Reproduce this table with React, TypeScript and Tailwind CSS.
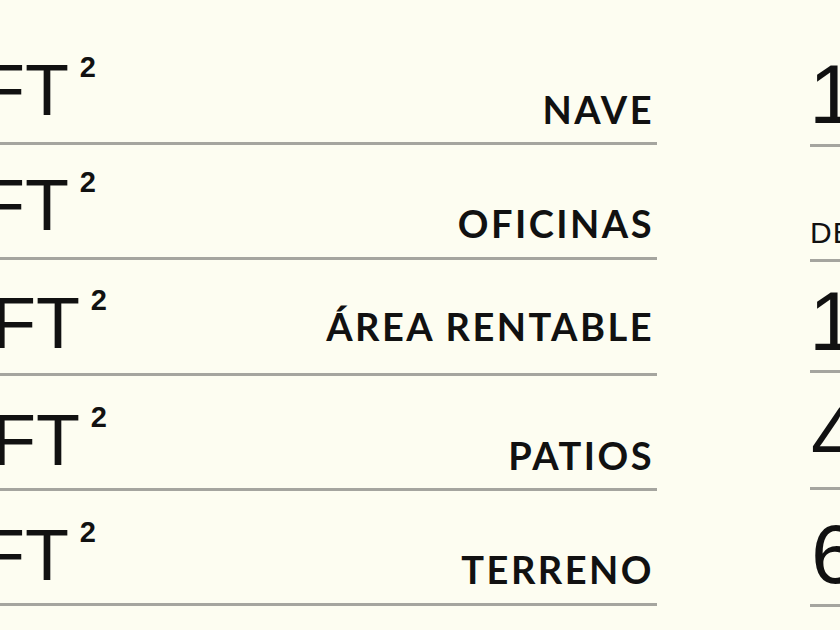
import React from 'react';

type Row = {
  value: string;
  label: string;
  valueBox: string;
  labelBox: string;
};

type Side = {
  text: string;
  box: string;
  textClass: string;
};

const rows: Row[] = [
  { value: '107,640', label: 'NAVE', valueBox: 'w-[96px] pb-[16px]', labelBox: 'pb-[14px]' },
  { value: '5,382', label: 'OFICINAS', valueBox: 'w-[96px] pb-[16px]', labelBox: 'pb-[15px]' },
  { value: '113,022', label: 'ÁREA RENTABLE', valueBox: 'w-[107px] pb-[14px]', labelBox: 'pb-[28px]' },
  { value: '48,438', label: 'PATIOS', valueBox: 'w-[107px] pb-[12px]', labelBox: 'pb-[14px]' },
  { value: '161,460', label: 'TERRENO', valueBox: 'w-[96px] pb-[12px]', labelBox: 'pb-[15px]' },
];

// right hand column, cut by the window edge
const side: Side[] = [
  { text: '10,000 M²', box: 'h-[116.75px] pb-[8px]', textClass: 'text-[84px] ml-[-1px]' },
  { text: 'DESDE 250 M²', box: 'h-[115px] pb-[11px]', textClass: "text-[30px] font-['Lato'] tracking-[0.04em]" },
  { text: '10,500 M²', box: 'h-[111px] pb-[7px]', textClass: 'text-[84px] ml-[-1px]' },
  { text: '4,500 M²', box: 'h-[117px] pb-[9px]', textClass: 'text-[84px] ml-[1px]' },
  { text: '6,000 M²', box: 'h-[117.5px] pb-[8px]', textClass: 'text-[84px] ml-[1px]' },
];

const App: React.FC = () => {
  return (
    <div className="relative h-[630px] w-[840px] overflow-hidden bg-[#fdfdf1] text-[#111111]">
      <div className="flex pt-[29.75px]">
        {/* superficies */}
        <div className="flex w-[657px] shrink-0 flex-col">
          {rows.map((r) => (
            <div key={r.label} className="flex h-[115.25px] border-b-[3px] border-[#a5a59f]">
              <div className={`flex shrink-0 items-end justify-end ${r.valueBox}`}>
                <div className="flex items-start whitespace-nowrap font-['Liberation_Sans',Arial,sans-serif]">
                  <span className="text-[72px] leading-none">{r.value} FT</span>
                  <span className="ml-[11px] mt-[-1px] text-[29px] font-bold leading-none">2</span>
                </div>
              </div>
              <div className={`flex flex-1 items-end justify-end pr-[3px] ${r.labelBox}`}>
                <span className="whitespace-nowrap font-['Lato',sans-serif] text-[38px] font-bold leading-none tracking-[0.065em]">
                  {r.label}
                </span>
              </div>
            </div>
          ))}
        </div>

        <div className="w-[153px] shrink-0" />

        <div className="flex flex-1 flex-col">
          {side.map((s, i) => (
            <div key={i} className={`flex items-end border-b-[3px] border-[#a5a59f] ${s.box}`}>
              <span className={`whitespace-nowrap font-['Liberation_Sans',Arial,sans-serif] leading-none ${s.textClass}`}>
                {s.text}
              </span>
            </div>
          ))}
        </div>
      </div>
    </div>
  );
};

export default App;
